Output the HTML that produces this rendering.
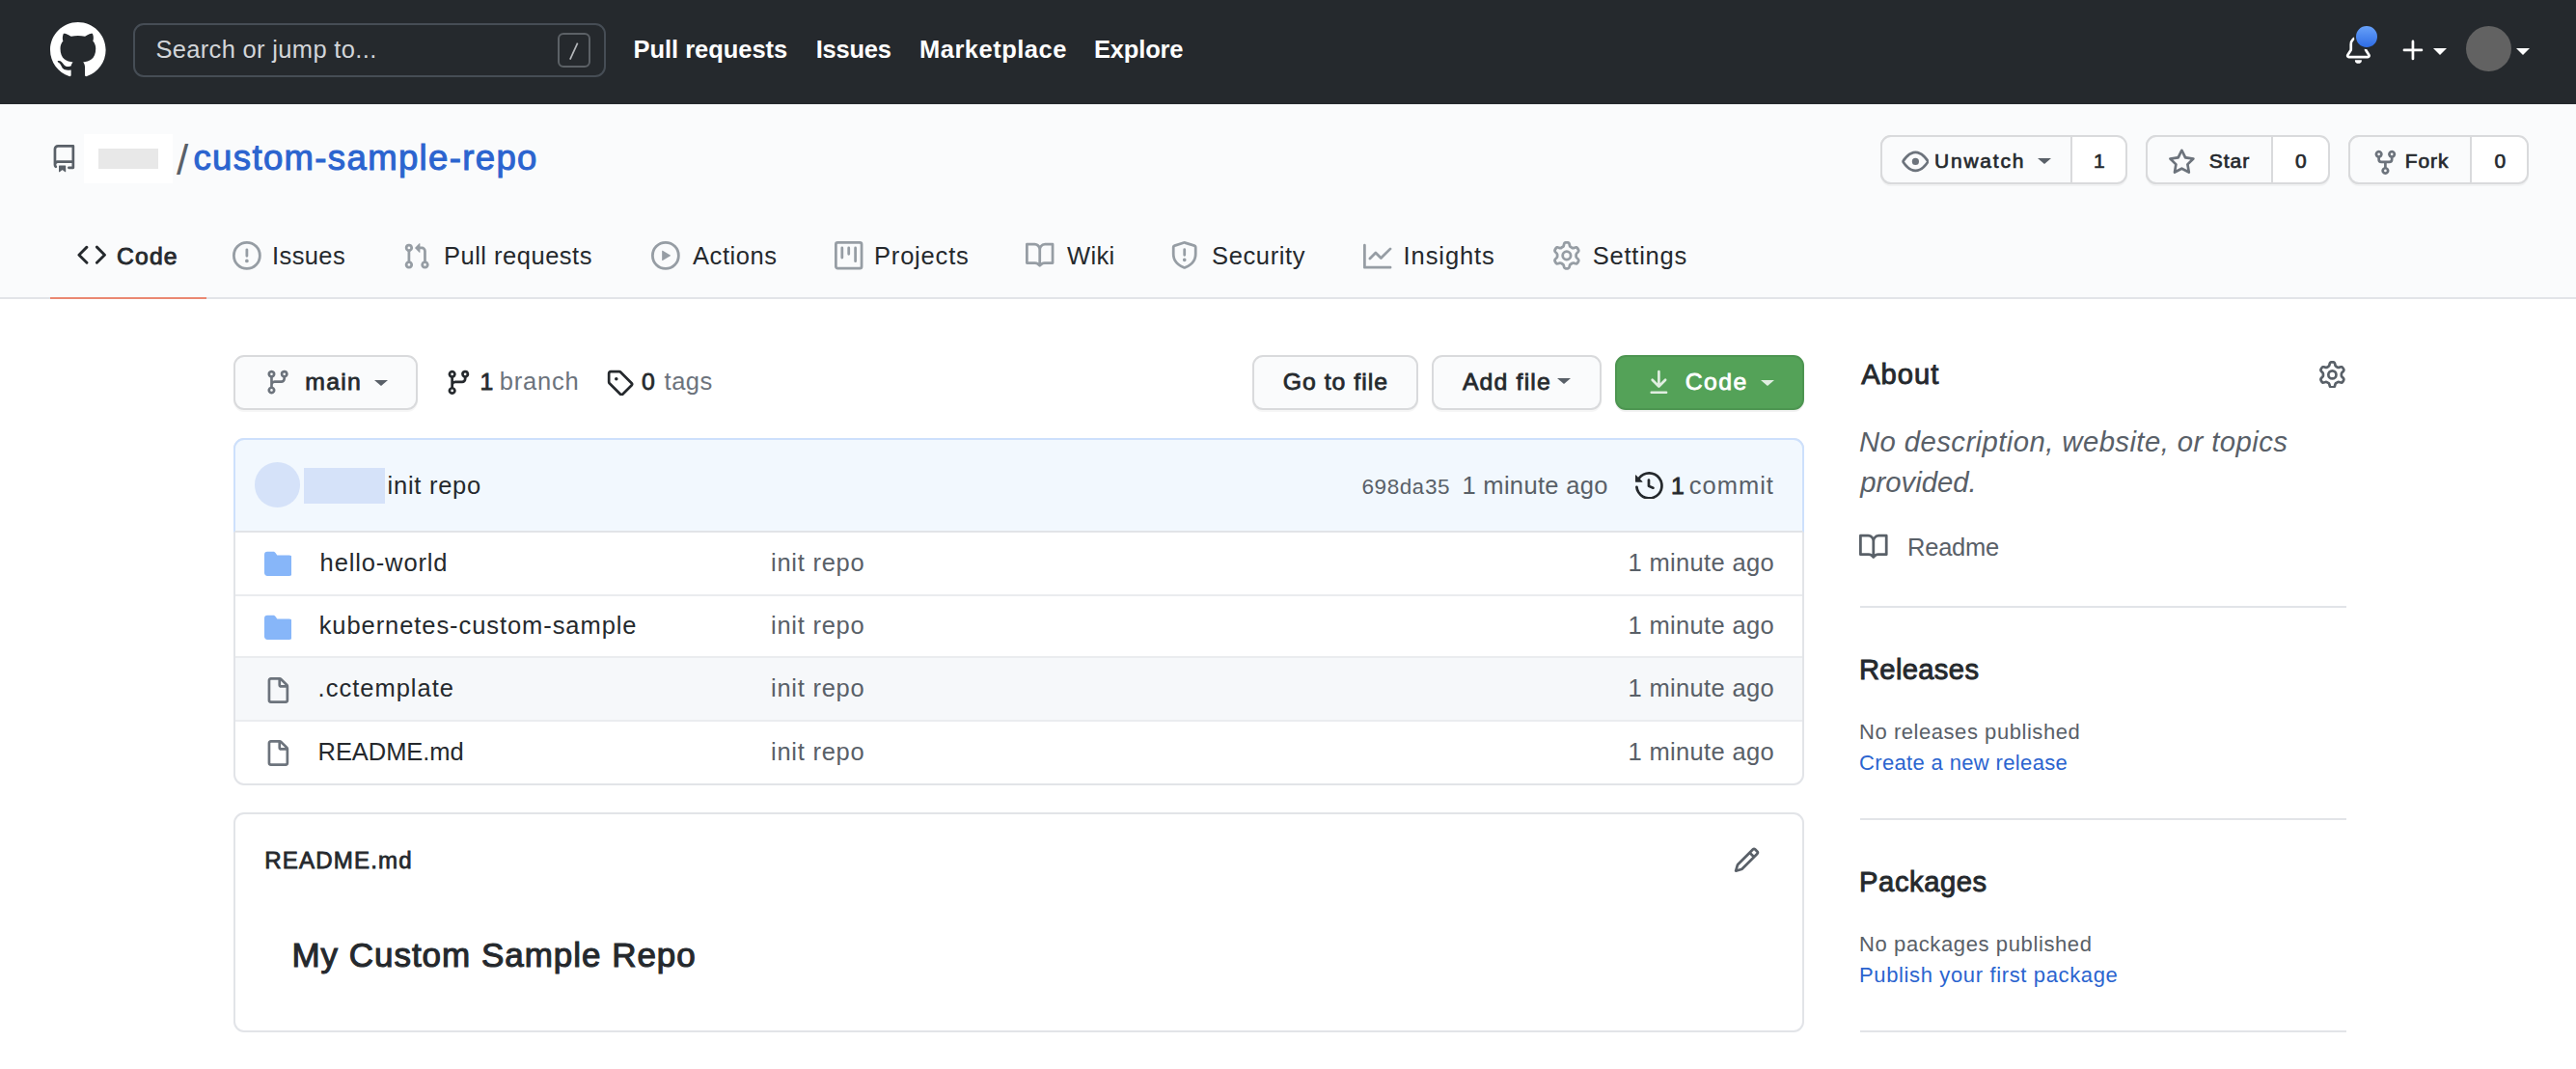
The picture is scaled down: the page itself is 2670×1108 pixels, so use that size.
<!DOCTYPE html>
<html><head><meta charset="utf-8"><title>custom-sample-repo</title>
<style>
html,body{margin:0;padding:0;}
body{width:2670px;height:1108px;overflow:hidden;position:relative;background:#fff;font-family:"Liberation Sans", sans-serif;}
.t{position:absolute;white-space:nowrap;}
.i{position:absolute;}
.b{position:absolute;box-sizing:border-box;}

.hdr{left:0;top:0;width:2670px;height:107.5px;background:#25292d;}
.rh{left:0;top:107.5px;width:2670px;height:202.5px;background:#fafbfc;border-bottom:2px solid #e2e4e8;}
.caret{position:absolute;width:0;height:0;border-left:7.6px solid transparent;border-right:7.6px solid transparent;border-top:7px solid currentColor;}
.btn{background:#fafbfc;border:2px solid #d9dadc;border-radius:11px;box-shadow:0 2px 0 rgba(27,31,35,0.04);}

</style></head><body>

<div class="b hdr"></div>
<div class="b" style="left:138px;top:24px;width:490px;height:56px;border:2px solid #464d55;border-radius:11px;"></div>
<div class="b" style="left:578px;top:34px;width:34px;height:36px;border:2px solid #5c6166;border-radius:6px;"></div>
<svg class="i" style="left:0;top:0" width="700" height="100"><line x1="598.3" y1="45.3" x2="591.2" y2="60.8" stroke="#b4b7ba" stroke-width="1.7" stroke-linecap="square"/></svg>
<div class="caret" style="left:2522px;top:50px;color:#fff;"></div>
<div class="b" style="left:2556.3px;top:27.3px;width:47px;height:47px;border-radius:50%;background:#626262;"></div>
<div class="caret" style="left:2608px;top:50px;color:#fff;"></div>
<div class="b rh"></div>
<div class="b" style="left:87px;top:139px;width:92px;height:51px;background:#fff;"></div>
<div class="b" style="left:102px;top:154px;width:62px;height:20.5px;background:#e8e8e8;"></div>
<!-- watch star fork -->
<div class="b btn" style="left:1948.5px;top:140.3px;width:256.7px;height:50.8px;background:#fff;"></div>
<div class="b" style="left:1948.5px;top:140.3px;width:199.3px;height:50.8px;background:#fafbfc;border:2px solid #d9dadc;border-radius:11px 0 0 11px;"></div>
<div class="caret" style="left:2111.5px;top:164px;color:#596068;border-top-width:6.6px;"></div>
<div class="b btn" style="left:2224.4px;top:140.3px;width:190.9px;height:50.8px;background:#fff;"></div>
<div class="b" style="left:2224.4px;top:140.3px;width:131.5px;height:50.8px;background:#fafbfc;border:2px solid #d9dadc;border-radius:11px 0 0 11px;"></div>
<div class="b btn" style="left:2434.4px;top:140.3px;width:187px;height:50.8px;background:#fff;"></div>
<div class="b" style="left:2434.4px;top:140.3px;width:127.2px;height:50.8px;background:#fafbfc;border:2px solid #d9dadc;border-radius:11px 0 0 11px;"></div>
<!-- tab underline -->
<div class="b" style="left:52px;top:307.5px;width:162px;height:2.5px;background:#ea8872;"></div>
<!-- branch row -->
<div class="b btn" style="left:242.3px;top:368.2px;width:191.2px;height:56.8px;"></div>
<div class="caret" style="left:388px;top:394px;color:#596068;border-top-width:6.3px;"></div>
<div class="b btn" style="left:1298.2px;top:368.2px;width:171.5px;height:56.8px;"></div>
<div class="b btn" style="left:1484.4px;top:368.2px;width:175.2px;height:56.8px;"></div>
<div class="caret" style="left:1614px;top:392px;color:#596068;border-top-width:6.3px;"></div>
<div class="b" style="left:1674px;top:368px;width:196px;height:57.2px;background:#54a258;border:2px solid #4d9551;border-radius:11px;box-shadow:0 2px 0 rgba(27,31,35,0.06);"></div>
<div class="caret" style="left:1824.5px;top:394px;color:rgba(255,255,255,0.82);border-top-width:6.3px;"></div>
<!-- file table -->
<div class="b" style="left:242px;top:454px;width:1628px;height:360px;border:2px solid #e2e4e8;border-radius:11px;overflow:hidden;background:#fff;">
  <div class="b" style="left:0;top:226px;width:1624px;height:64px;background:#f6f8fa;"></div>
  <div class="b" style="left:0;top:160px;width:1624px;height:2px;background:#eaecef;"></div>
  <div class="b" style="left:0;top:224px;width:1624px;height:2px;background:#eaecef;"></div>
  <div class="b" style="left:0;top:290px;width:1624px;height:2px;background:#eaecef;"></div>
</div>
<div class="b" style="left:242px;top:454px;width:1628px;height:98px;background:#f2f8fe;border:2px solid #cde0fc;border-bottom:2px solid #e2e4e8;border-radius:11px 11px 0 0;"></div>
<div class="b" style="left:263.5px;top:479.3px;width:47px;height:46.5px;border-radius:50%;background:#d5e2f9;"></div>
<div class="b" style="left:315px;top:485px;width:84px;height:37px;background:#d5e2f9;"></div>
<!-- readme box -->
<div class="b" style="left:242px;top:842px;width:1628px;height:228px;border:2px solid #e2e4e8;border-radius:11px;"></div>
<!-- sidebar dividers -->
<div class="b" style="left:1928px;top:628px;width:504px;height:2px;background:#e2e4e8;"></div>
<div class="b" style="left:1928px;top:848px;width:504px;height:2px;background:#e2e4e8;"></div>
<div class="b" style="left:1928px;top:1068px;width:504px;height:2px;background:#e2e4e8;"></div>
<!-- notification dot -->
<div class="b" style="left:2440.2px;top:25.2px;width:25.5px;height:25.5px;border-radius:50%;z-index:5;border:2.5px solid #25292d;background:linear-gradient(#68a1f8,#2e6ce5);"></div>

<div class=t style='left:161.40px;top:39.00px;font-family:"Liberation Sans", sans-serif;font-size:25.5px;line-height:25.5px;font-weight:400;color:#d2d5d9;letter-spacing:0.332px'>Search or jump to...</div><div class=t style='left:656.50px;top:38.90px;font-family:"Liberation Sans", sans-serif;font-size:25.5px;line-height:25.5px;font-weight:700;color:#ffffff;letter-spacing:-0.033px'>Pull requests</div><div class=t style='left:845.70px;top:38.90px;font-family:"Liberation Sans", sans-serif;font-size:25.5px;line-height:25.5px;font-weight:700;color:#ffffff;letter-spacing:-0.22px'>Issues</div><div class=t style='left:953.00px;top:38.90px;font-family:"Liberation Sans", sans-serif;font-size:25.5px;line-height:25.5px;font-weight:700;color:#ffffff;letter-spacing:0.5px'>Marketplace</div><div class=t style='left:1134.00px;top:38.90px;font-family:"Liberation Sans", sans-serif;font-size:25.5px;line-height:25.5px;font-weight:700;color:#ffffff;letter-spacing:-0.167px'>Explore</div><div class=t style='left:183.00px;top:144.00px;font-family:"Liberation Sans", sans-serif;font-size:44px;line-height:44px;font-weight:400;color:#596068;letter-spacing:0px'>/</div><div class=t style='left:200.50px;top:146.00px;font-family:"Liberation Sans", sans-serif;font-size:36.6px;line-height:36.6px;font-weight:400;color:#2b64cf;letter-spacing:1.324px;-webkit-text-stroke:1.0px #2b64cf'>custom-sample-repo</div><div class=t style='left:2005.00px;top:156.00px;font-family:"Liberation Sans", sans-serif;font-size:20.99px;line-height:20.99px;font-weight:400;color:#25292d;letter-spacing:1.783px;-webkit-text-stroke:0.68px #25292d'>Unwatch</div><div class=t style='left:2170.00px;top:156.00px;font-family:"Liberation Sans", sans-serif;font-size:20.99px;line-height:20.99px;font-weight:400;color:#25292d;letter-spacing:0px;-webkit-text-stroke:0.68px #25292d'>1</div><div class=t style='left:2289.70px;top:156.00px;font-family:"Liberation Sans", sans-serif;font-size:20.99px;line-height:20.99px;font-weight:400;color:#25292d;letter-spacing:1.033px;-webkit-text-stroke:0.68px #25292d'>Star</div><div class=t style='left:2379.00px;top:156.00px;font-family:"Liberation Sans", sans-serif;font-size:20.99px;line-height:20.99px;font-weight:400;color:#25292d;letter-spacing:0px;-webkit-text-stroke:0.68px #25292d'>0</div><div class=t style='left:2492.70px;top:156.00px;font-family:"Liberation Sans", sans-serif;font-size:20.99px;line-height:20.99px;font-weight:400;color:#25292d;letter-spacing:0.967px;-webkit-text-stroke:0.68px #25292d'>Fork</div><div class=t style='left:2585.50px;top:156.00px;font-family:"Liberation Sans", sans-serif;font-size:20.99px;line-height:20.99px;font-weight:400;color:#25292d;letter-spacing:0px;-webkit-text-stroke:0.68px #25292d'>0</div><div class=t style='left:121.10px;top:253.80px;font-family:"Liberation Sans", sans-serif;font-size:24.69px;line-height:24.69px;font-weight:400;color:#25292d;letter-spacing:1.133px;-webkit-text-stroke:0.9px #25292d'>Code</div><div class=t style='left:282.00px;top:252.80px;font-family:"Liberation Sans", sans-serif;font-size:25.5px;line-height:25.5px;font-weight:400;color:#25292d;letter-spacing:0.4px'>Issues</div><div class=t style='left:460.00px;top:252.80px;font-family:"Liberation Sans", sans-serif;font-size:25.5px;line-height:25.5px;font-weight:400;color:#25292d;letter-spacing:0.5px'>Pull requests</div><div class=t style='left:718.00px;top:252.80px;font-family:"Liberation Sans", sans-serif;font-size:25.5px;line-height:25.5px;font-weight:400;color:#25292d;letter-spacing:0.583px'>Actions</div><div class=t style='left:906.00px;top:252.80px;font-family:"Liberation Sans", sans-serif;font-size:25.5px;line-height:25.5px;font-weight:400;color:#25292d;letter-spacing:0.814px'>Projects</div><div class=t style='left:1106.00px;top:252.80px;font-family:"Liberation Sans", sans-serif;font-size:25.5px;line-height:25.5px;font-weight:400;color:#25292d;letter-spacing:0.333px'>Wiki</div><div class=t style='left:1256.00px;top:252.80px;font-family:"Liberation Sans", sans-serif;font-size:25.5px;line-height:25.5px;font-weight:400;color:#25292d;letter-spacing:0.629px'>Security</div><div class=t style='left:1454.60px;top:252.80px;font-family:"Liberation Sans", sans-serif;font-size:25.5px;line-height:25.5px;font-weight:400;color:#25292d;letter-spacing:0.914px'>Insights</div><div class=t style='left:1650.80px;top:252.80px;font-family:"Liberation Sans", sans-serif;font-size:25.5px;line-height:25.5px;font-weight:400;color:#25292d;letter-spacing:0.743px'>Settings</div><div class=t style='left:316.30px;top:384.00px;font-family:"Liberation Sans", sans-serif;font-size:24.78px;line-height:24.78px;font-weight:400;color:#25292d;letter-spacing:1.267px;-webkit-text-stroke:0.8px #25292d'>main</div><div class=t style='left:497.40px;top:384.00px;font-family:"Liberation Sans", sans-serif;font-size:24.78px;line-height:24.78px;font-weight:400;color:#25292d;letter-spacing:0px;-webkit-text-stroke:0.8px #25292d'>1</div><div class=t style='left:517.80px;top:383.00px;font-family:"Liberation Sans", sans-serif;font-size:25.5px;line-height:25.5px;font-weight:400;color:#6c737c;letter-spacing:0.78px'>branch</div><div class=t style='left:665.00px;top:384.00px;font-family:"Liberation Sans", sans-serif;font-size:24.78px;line-height:24.78px;font-weight:400;color:#25292d;letter-spacing:0px;-webkit-text-stroke:0.8px #25292d'>0</div><div class=t style='left:688.60px;top:383.00px;font-family:"Liberation Sans", sans-serif;font-size:25.5px;line-height:25.5px;font-weight:400;color:#6c737c;letter-spacing:0.467px'>tags</div><div class=t style='left:1329.75px;top:384.00px;font-family:"Liberation Sans", sans-serif;font-size:24.78px;line-height:24.78px;font-weight:400;color:#25292d;letter-spacing:1.017px;-webkit-text-stroke:0.8px #25292d'>Go to file</div><div class=t style='left:1515.90px;top:384.00px;font-family:"Liberation Sans", sans-serif;font-size:24.78px;line-height:24.78px;font-weight:400;color:#25292d;letter-spacing:1.186px;-webkit-text-stroke:0.8px #25292d'>Add file</div><div class=t style='left:1746.70px;top:384.00px;font-family:"Liberation Sans", sans-serif;font-size:24.78px;line-height:24.78px;font-weight:400;color:#ffffff;letter-spacing:1.433px;-webkit-text-stroke:0.8px #ffffff'>Code</div><div class=t style='left:401.60px;top:491.00px;font-family:"Liberation Sans", sans-serif;font-size:25.5px;line-height:25.5px;font-weight:400;color:#25292d;letter-spacing:0.737px'>init repo</div><div class=t style='left:1411.00px;top:495.00px;font-family:"Liberation Mono", monospace;font-size:22.5px;line-height:22.5px;font-weight:400;color:#596068;letter-spacing:-0.417px'>698da35</div><div class=t style='left:1515.40px;top:491.00px;font-family:"Liberation Sans", sans-serif;font-size:25.5px;line-height:25.5px;font-weight:400;color:#596068;letter-spacing:0.327px'>1 minute ago</div><div class=t style='left:1732.00px;top:492.00px;font-family:"Liberation Sans", sans-serif;font-size:24.78px;line-height:24.78px;font-weight:400;color:#25292d;letter-spacing:0px;-webkit-text-stroke:0.8px #25292d'>1</div><div class=t style='left:1750.80px;top:491.00px;font-family:"Liberation Sans", sans-serif;font-size:25.5px;line-height:25.5px;font-weight:400;color:#596068;letter-spacing:0.98px'>commit</div><div class=t style='left:331.60px;top:570.80px;font-family:"Liberation Sans", sans-serif;font-size:25.5px;line-height:25.5px;font-weight:400;color:#25292d;letter-spacing:0.86px'>hello-world</div><div class=t style='left:799.00px;top:570.80px;font-family:"Liberation Sans", sans-serif;font-size:25.5px;line-height:25.5px;font-weight:400;color:#596068;letter-spacing:0.75px'>init repo</div><div class=t style='left:1687.50px;top:570.80px;font-family:"Liberation Sans", sans-serif;font-size:25.5px;line-height:25.5px;font-weight:400;color:#596068;letter-spacing:0.345px'>1 minute ago</div><div class=t style='left:330.70px;top:636.05px;font-family:"Liberation Sans", sans-serif;font-size:25.5px;line-height:25.5px;font-weight:400;color:#25292d;letter-spacing:0.926px'>kubernetes-custom-sample</div><div class=t style='left:799.00px;top:636.05px;font-family:"Liberation Sans", sans-serif;font-size:25.5px;line-height:25.5px;font-weight:400;color:#596068;letter-spacing:0.75px'>init repo</div><div class=t style='left:1687.50px;top:636.05px;font-family:"Liberation Sans", sans-serif;font-size:25.5px;line-height:25.5px;font-weight:400;color:#596068;letter-spacing:0.345px'>1 minute ago</div><div class=t style='left:329.60px;top:701.30px;font-family:"Liberation Sans", sans-serif;font-size:25.5px;line-height:25.5px;font-weight:400;color:#25292d;letter-spacing:0.99px'>.cctemplate</div><div class=t style='left:799.00px;top:701.30px;font-family:"Liberation Sans", sans-serif;font-size:25.5px;line-height:25.5px;font-weight:400;color:#596068;letter-spacing:0.75px'>init repo</div><div class=t style='left:1687.50px;top:701.30px;font-family:"Liberation Sans", sans-serif;font-size:25.5px;line-height:25.5px;font-weight:400;color:#596068;letter-spacing:0.345px'>1 minute ago</div><div class=t style='left:329.60px;top:766.55px;font-family:"Liberation Sans", sans-serif;font-size:25.5px;line-height:25.5px;font-weight:400;color:#25292d;letter-spacing:-0.075px'>README.md</div><div class=t style='left:799.00px;top:766.55px;font-family:"Liberation Sans", sans-serif;font-size:25.5px;line-height:25.5px;font-weight:400;color:#596068;letter-spacing:0.75px'>init repo</div><div class=t style='left:1687.50px;top:766.55px;font-family:"Liberation Sans", sans-serif;font-size:25.5px;line-height:25.5px;font-weight:400;color:#596068;letter-spacing:0.345px'>1 minute ago</div><div class=t style='left:274.20px;top:880.30px;font-family:"Liberation Sans", sans-serif;font-size:24.08px;line-height:24.08px;font-weight:400;color:#25292d;letter-spacing:1.163px;-webkit-text-stroke:0.8px #25292d'>README.md</div><div class=t style='left:302.40px;top:971.90px;font-family:"Liberation Sans", sans-serif;font-size:35.01px;line-height:35.01px;font-weight:400;color:#25292d;letter-spacing:0.98px;-webkit-text-stroke:1.1px #25292d'>My Custom Sample Repo</div><div class=t style='left:1929.20px;top:373.90px;font-family:"Liberation Sans", sans-serif;font-size:29.19px;line-height:29.19px;font-weight:400;color:#25292d;letter-spacing:0.95px;-webkit-text-stroke:0.9px #25292d'>About</div><div class=t style='left:1927.00px;top:442.60px;font-family:"Liberation Sans", sans-serif;font-size:29.3px;line-height:29.3px;font-weight:400;color:#596068;letter-spacing:0.424px;font-style:italic'>No description, website, or topics</div><div class=t style='left:1928.20px;top:484.80px;font-family:"Liberation Sans", sans-serif;font-size:29.3px;line-height:29.3px;font-weight:400;color:#596068;letter-spacing:0px;font-style:italic'>provided.</div><div class=t style='left:1977.10px;top:554.60px;font-family:"Liberation Sans", sans-serif;font-size:25.5px;line-height:25.5px;font-weight:400;color:#596068;letter-spacing:-0.26px'>Readme</div><div class=t style='left:1926.90px;top:680.30px;font-family:"Liberation Sans", sans-serif;font-size:29.19px;line-height:29.19px;font-weight:400;color:#25292d;letter-spacing:0.343px;-webkit-text-stroke:0.9px #25292d'>Releases</div><div class=t style='left:1927.00px;top:748.20px;font-family:"Liberation Sans", sans-serif;font-size:22px;line-height:22px;font-weight:400;color:#596068;letter-spacing:0.55px'>No releases published</div><div class=t style='left:1927.00px;top:780.00px;font-family:"Liberation Sans", sans-serif;font-size:22px;line-height:22px;font-weight:400;color:#2b64cf;letter-spacing:0.353px'>Create a new release</div><div class=t style='left:1927.10px;top:900.20px;font-family:"Liberation Sans", sans-serif;font-size:29.19px;line-height:29.19px;font-weight:400;color:#25292d;letter-spacing:0.543px;-webkit-text-stroke:0.9px #25292d'>Packages</div><div class=t style='left:1927.00px;top:968.00px;font-family:"Liberation Sans", sans-serif;font-size:22px;line-height:22px;font-weight:400;color:#596068;letter-spacing:0.61px'>No packages published</div><div class=t style='left:1927.00px;top:999.50px;font-family:"Liberation Sans", sans-serif;font-size:22px;line-height:22px;font-weight:400;color:#2b64cf;letter-spacing:0.636px'>Publish your first package</div><svg class=i style='left:52.20px;top:23.11px;width:57.60px;height:57.60px' viewBox='0 0 16 16' fill='#ffffff' fill-rule='evenodd'><path d='M8 0C3.58 0 0 3.58 0 8c0 3.54 2.29 6.53 5.47 7.59.4.07.55-.17.55-.38 0-.19-.01-.82-.01-1.49-2.01.37-2.53-.49-2.69-.94-.09-.23-.48-.94-.82-1.13-.28-.15-.68-.52-.01-.53.63-.01 1.08.58 1.23.82.72 1.21 1.87.87 2.33.66.07-.52.28-.87.51-1.07-1.780-.2-3.64-.89-3.64-3.95 0-.87.31-1.59.82-2.15-.08-.2-.36-1.02.08-2.12 0 0 .67-.21 2.2.82.64-.18 1.32-.27 2-.27.68 0 1.36.09 2 .27 1.53-1.04 2.2-.82 2.2-.82.44 1.1.16 1.92.08 2.12.51.56.82 1.27.82 2.15 0 3.07-1.87 3.75-3.65 3.95.29.25.54.73.54 1.48 0 1.07-.01 1.93-.01 2.2 0 .21.15.46.55.38A8.013 8.013 0 0016 8c0-4.42-3.58-8-8-8z'/></svg><svg class=i style='left:2430.20px;top:37.20px;width:28.80px;height:28.80px' viewBox='0 0 16 16' fill='#ffffff' fill-rule='evenodd'><path d='M8 16a2 2 0 001.985-1.75c.017-.137-.097-.25-.235-.25h-3.5c-.138 0-.252.113-.235.25A2 2 0 008 16zM8 1.5A3.5 3.5 0 004.5 5v2.947c0 .346-.102.683-.294.97l-1.703 2.556a.018.018 0 00-.003.01l.001.006c0 .002.002.004.004.006a.017.017 0 00.006.004l.007.001h10.964l.007-.001a.016.016 0 00.006-.004.016.016 0 00.004-.006l.001-.007a.017.017 0 00-.003-.01l-1.703-2.554a1.75 1.75 0 01-.294-.97V5A3.5 3.5 0 008 1.5zM3 5a5 5 0 0110 0v2.947c0 .05.015.098.042.139l1.703 2.555A1.518 1.518 0 0113.482 13H2.518a1.518 1.518 0 01-1.263-2.36l1.703-2.554A.25.25 0 003 7.947V5z'/></svg><svg class=i style='left:2486.55px;top:37.65px;width:28.80px;height:28.80px' viewBox='0 0 16 16' fill='#ffffff' fill-rule='evenodd'><path d='M7.750 2a.75.75 0 01.75.75V7h4.25a.75.75 0 110 1.5H8.5v4.25a.75.75 0 11-1.5 0V8.5H2.75a.75.75 0 010-1.5H7V2.75A.75.75 0 017.75 2z'/></svg><svg class=i style='left:51.60px;top:150.32px;width:28.80px;height:28.80px' viewBox='0 0 16 16' fill='#596068' fill-rule='evenodd'><path d='M2 2.5A2.5 2.5 0 014.5 0h8.75a.75.75 0 01.75.75v12.5a.75.75 0 01-.75.75h-2.5a.75.75 0 110-1.5h1.75v-2h-8a1 1 0 00-.714 1.7.75.75 0 01-1.072 1.05A2.495 2.495 0 012 11.5v-9zm10.5-1V9h-8c-.356 0-.694.074-1 .208V2.5a1 1 0 011-1h8zM5 12.25v3.25a.25.25 0 00.4.2l1.45-1.087a.25.25 0 01.3 0L8.6 15.7a.25.25 0 00.4-.2v-3.25a.25.25 0 00-.25-.25h-3.5a.25.25 0 00-.25.25z'/></svg><svg class=i style='left:79.95px;top:249.45px;width:30.40px;height:30.40px' viewBox='0 0 16 16' fill='#25292d' fill-rule='evenodd'><path d='M4.72 3.22a.75.75 0 011.06 1.06L2.06 8l3.72 3.72a.75.75 0 11-1.06 1.06L.47 8.53a.75.75 0 010-1.06l4.25-4.25zm6.56 0a.75.75 0 10-1.06 1.06L13.94 8l-3.72 3.72a.75.75 0 101.06 1.06l4.25-4.25a.75.75 0 000-1.06l-4.25-4.25z'/></svg><svg class=i style='left:241.12px;top:250.32px;width:29.76px;height:29.76px' viewBox='0 0 16 16' fill='#969da4' fill-rule='evenodd'><path d='M8 1.5a6.5 6.5 0 100 13 6.5 6.5 0 000-13zM0 8a8 8 0 1116 0A8 8 0 010 8zm9 3a1 1 0 11-2 0 1 1 0 012 0zm-.25-6.25a.75.75 0 00-1.5 0v3.5a.75.75 0 001.5 0v-3.5z'/></svg><svg class=i style='left:417.47px;top:250.94px;width:29.44px;height:29.44px' viewBox='0 0 16 16' fill='#969da4' fill-rule='evenodd'><path d='M7.177 3.073L9.573.677A.25.25 0 0110 .854v4.792a.25.25 0 01-.427.177L7.177 3.427a.25.25 0 010-.354zM3.75 2.5a.75.75 0 100 1.5.75.75 0 000-1.5zm-2.25.75a2.25 2.25 0 113 2.122v5.256a2.251 2.251 0 11-1.5 0V5.372A2.25 2.25 0 011.5 3.25zM11 2.5h-1V4h1a1 1 0 011 1v5.628a2.251 2.251 0 101.5 0V5A2.5 2.5 0 0011 2.5zm1 10.25a.75.75 0 111.5 0 .75.75 0 01-1.5 0zM3.75 12a.75.75 0 100 1.5.75.75 0 000-1.5z'/></svg><svg class=i style='left:674.97px;top:250.32px;width:29.76px;height:29.76px' viewBox='0 0 16 16' fill='#969da4' fill-rule='evenodd'><path d='M1.5 8a6.5 6.5 0 1113 0 6.5 6.5 0 01-13 0zM8 0a8 8 0 100 16A8 8 0 008 0zM6.379 5.227A.25.25 0 006 5.442v5.117a.25.25 0 00.379.214l4.264-2.559a.25.25 0 000-.428L6.379 5.227z'/></svg><svg class=i style='left:865.28px;top:250.48px;width:29.44px;height:29.44px' viewBox='0 0 16 16' fill='#969da4' fill-rule='evenodd'><path d='M1.75 0A1.75 1.75 0 000 1.75v12.5C0 15.216.784 16 1.75 16h12.5A1.75 1.75 0 0016 14.25V1.75A1.75 1.75 0 0014.25 0H1.75zM1.5 1.75a.25.25 0 01.25-.25h12.5a.25.25 0 01.25.25v12.5a.25.25 0 01-.25.25H1.75a.25.25 0 01-.25-.25V1.75zM11.75 3a.75.75 0 00-.75.75v7.5a.75.75 0 001.5 0v-7.5a.75.75 0 00-.75-.75zm-8.25.75a.75.75 0 011.5 0v5.5a.75.75 0 01-1.5 0v-5.5zM8 3a.75.75 0 00-.75.75v3.5a.75.75 0 001.5 0v-3.5A.75.75 0 008 3z'/></svg><svg class=i style='left:1063.08px;top:250.34px;width:29.44px;height:29.44px' viewBox='0 0 16 16' fill='#969da4' fill-rule='evenodd'><path d='M0 1.75A.75.75 0 01.75 1h4.253c1.227 0 2.317.59 3 1.501A3.744 3.744 0 0111.006 1h4.245a.75.75 0 01.75.75v10.5a.75.75 0 01-.75.75h-4.507a2.25 2.25 0 00-1.591.659l-.622.621a.75.75 0 01-1.06 0l-.622-.621A2.25 2.25 0 005.258 13H.75a.75.75 0 01-.75-.75V1.75zm8.755 3a2.25 2.25 0 012.25-2.25H14.5v9h-3.757c-.71 0-1.4.201-1.992.572l.004-7.322zm-1.504 7.324l.004-5.073-.002-2.253A2.25 2.25 0 005.003 2.5H1.5v9h3.757a3.75 3.75 0 011.994.574z'/></svg><svg class=i style='left:1212.78px;top:250.14px;width:29.44px;height:29.44px' viewBox='0 0 16 16' fill='#969da4' fill-rule='evenodd'><path d='M7.467.133a1.75 1.75 0 011.066 0l5.25 1.68A1.75 1.75 0 0115 3.48V7c0 1.566-.32 3.182-1.303 4.682-.983 1.498-2.585 2.813-5.032 3.855a1.7 1.7 0 01-1.33 0c-2.447-1.042-4.049-2.357-5.032-3.855C1.32 10.182 1 8.566 1 7V3.48a1.75 1.75 0 011.217-1.667l5.25-1.68zm.61 1.429a.25.25 0 00-.153 0l-5.25 1.68a.25.25 0 00-.174.238V7c0 1.358.275 2.666 1.057 3.86.784 1.194 2.121 2.34 4.366 3.297a.2.2 0 00.154 0c2.245-.956 3.582-2.104 4.366-3.298C13.225 9.666 13.5 8.36 13.5 7V3.48a.25.25 0 00-.174-.237l-5.25-1.68zM9 10.5a1 1 0 11-2 0 1 1 0 012 0zm-.25-5.75a.75.75 0 10-1.5 0v3a.75.75 0 001.5 0v-3z'/></svg><svg class=i style='left:1413.18px;top:250.58px;width:29.44px;height:29.44px' viewBox='0 0 16 16' fill='#969da4' fill-rule='evenodd'><path d='M1.5 1.75a.75.75 0 00-1.5 0v12.5c0 .414.336.75.75.75h14.5a.75.75 0 000-1.5H1.5V1.75zm14.28 2.53a.75.75 0 00-1.06-1.06L10 7.940 7.53 5.47a.75.75 0 00-1.06 0L3.22 8.72a.75.75 0 001.06 1.06L7 7.06l2.47 2.47a.75.75 0 001.06 0l5.250-5.25z'/></svg><svg class=i style='left:1609.12px;top:250.32px;width:29.76px;height:29.76px' viewBox='0 0 16 16' fill='#969da4' fill-rule='evenodd'><path d='M7.429 1.525a6.593 6.593 0 011.142 0c.036.003.108.036.137.146l.289 1.105c.147.56.55.967.997 1.189.174.086.341.183.501.29.417.278.97.423 1.53.27l1.102-.303c.11-.03.175.016.195.046.219.31.41.641.573.989.014.031.022.11-.059.19l-.815.806c-.411.406-.562.957-.53 1.456a4.588 4.588 0 010 .582c-.032.499.119 1.05.53 1.456l.815.806c.08.08.073.159.059.19a6.494 6.494 0 01-.573.99c-.02.029-.086.074-.195.045l-1.103-.303c-.559-.153-1.112-.008-1.529.27-.16.107-.327.204-.5.29-.449.222-.851.628-.998 1.189l-.289 1.105c-.029.11-.101.143-.137.146a6.613 6.613 0 01-1.142 0c-.036-.003-.108-.037-.137-.146l-.289-1.105c-.147-.56-.55-.967-.997-1.189a4.502 4.502 0 01-.501-.29c-.417-.278-.97-.423-1.530-.27l-1.102.303c-.11.03-.175-.016-.195-.046a6.492 6.492 0 01-.573-.989c-.014-.031-.022-.11.059-.19l.815-.806c.411-.406.562-.957.53-1.456a4.587 4.587 0 010-.582c.032-.499-.119-1.05-.53-1.456l-.815-.806c-.08-.08-.073-.159-.059-.19a6.44 6.44 0 01.573-.99c.02-.029.086-.075.195-.045l1.103.303c.559.153 1.112.008 1.529-.27.16-.107.327-.204.5-.29.449-.222.851-.628.998-1.189l.289-1.105c.029-.11.101-.143.137-.146zM8 0c-.236 0-.47.01-.701.03-.743.065-1.29.615-1.458 1.261l-.29 1.106c-.017.066-.078.158-.211.224a5.994 5.994 0 00-.668.386c-.123.082-.233.09-.3.071L3.27 2.776c-.644-.177-1.392.02-1.82.63a7.977 7.977 0 00-.704 1.217c-.315.675-.111 1.422.363 1.891l.815.806c.05.048.098.147.088.294a6.084 6.084 0 000 .772c.01.147-.038.246-.088.294l-.815.806c-.474.469-.678 1.216-.363 1.891.2.428.436.835.704 1.218.428.609 1.176.806 1.82.63l1.103-.303c.066-.019.176-.011.299.071.213.143.436.272.668.386.133.066.194.158.212.224l.289 1.106c.169.646.715 1.196 1.458 1.26a8.094 8.094 0 001.402 0c.743-.064 1.29-.614 1.458-1.26l.29-1.106c.017-.066.078-.158.211-.224a5.98 5.98 0 00.668-.386c.123-.082.233-.09.299-.071l1.103.303c.644.176 1.392-.021 1.82-.63.268-.382.505-.789.704-1.217.315-.675.111-1.422-.364-1.891l-.814-.806c-.05-.048-.098-.147-.088-.294a6.1 6.1 0 000-.772c-.01-.147.039-.246.088-.294l.814-.806c.475-.469.679-1.216.364-1.891a7.992 7.992 0 00-.704-1.218c-.428-.609-1.176-.806-1.82-.63l-1.103.303c-.066.019-.176.011-.299-.071a5.991 5.991 0 00-.668-.386c-.133-.066-.194-.158-.212-.224L10.16 1.29C9.99.645 9.444.095 8.701.031A8.094 8.094 0 008 0zm1.5 8a1.5 1.5 0 11-3 0 1.5 1.5 0 013 0zM11 8a3 3 0 11-6 0 3 3 0 016 0z'/></svg><svg class=i style='left:1970.60px;top:153.40px;width:28.80px;height:28.80px' viewBox='0 0 16 16' fill='#6c737c' fill-rule='evenodd'><path d='M1.679 7.932c.412-.621 1.242-1.75 2.366-2.717C5.175 4.242 6.527 3.5 8 3.5c1.473 0 2.824.742 3.955 1.715 1.124.967 1.954 2.096 2.366 2.717a.119.119 0 010 .136c-.412.621-1.242 1.75-2.366 2.717C10.825 11.758 9.473 12.5 8 12.5c-1.473 0-2.824-.742-3.955-1.715C2.92 9.818 2.09 8.690 1.679 8.068a.119.119 0 010-.136zM8 2c-1.981 0-3.67.992-4.933 2.078C1.797 5.169.88 6.423.43 7.1a1.619 1.619 0 000 1.798c.45.678 1.367 1.932 2.637 3.024C4.329 13.008 6.019 14 8 14c1.981 0 3.67-.992 4.933-2.078 1.27-1.091 2.187-2.345 2.637-3.023a1.619 1.619 0 000-1.798c-.45-.678-1.367-1.932-2.637-3.023C11.671 2.992 9.981 2 8 2zm0 8a2 2 0 100-4 2 2 0 000 4z'/></svg><svg class=i style='left:2246.50px;top:153.65px;width:28.80px;height:28.80px' viewBox='0 0 16 16' fill='#6c737c' fill-rule='evenodd'><path d='M8 .25a.75.75 0 01.673.418l1.882 3.815 4.210.612a.75.75 0 01.416 1.279l-3.046 2.970.719 4.192a.75.75 0 01-1.088.791L8 12.347l-3.766 1.980a.75.75 0 01-1.088-.79l.72-4.194L.818 6.374a.75.75 0 01.416-1.280l4.210-.611L7.327.668A.75.75 0 018 .25zm0 2.445L6.615 5.500a.75.75 0 01-.564.41l-3.097.45 2.240 2.184a.75.75 0 01.216.664l-.528 3.084 2.769-1.456a.75.75 0 01.698 0l2.770 1.456-.530-3.084a.75.75 0 01.216-.664l2.240-2.183-3.096-.45a.75.75 0 01-.564-.41L8 2.694v.001z'/></svg><svg class=i style='left:2457.65px;top:153.50px;width:28.80px;height:28.80px' viewBox='0 0 16 16' fill='#6c737c' fill-rule='evenodd'><path d='M5 3.25a.75.75 0 11-1.5 0 .75.75 0 011.5 0zm0 2.122a2.25 2.25 0 10-1.5 0v.878A2.25 2.25 0 005.75 8.5h1.5v2.128a2.251 2.251 0 101.5 0V8.5h1.5a2.25 2.25 0 002.25-2.25v-.878a2.25 2.25 0 10-1.5 0v.878a.75.75 0 01-.75.75h-4.5A.75.75 0 015 6.25v-.878zm3.75 7.378a.75.75 0 11-1.5 0 .75.75 0 011.5 0zm3-8.75a.75.75 0 100-1.5.75.75 0 000 1.5z'/></svg><svg class=i style='left:273.97px;top:381.92px;width:28.16px;height:28.16px' viewBox='0 0 16 16' fill='#6c737c' fill-rule='evenodd'><path d='M11.75 2.5a.75.75 0 100 1.5.75.75 0 000-1.5zm-2.25.75a2.25 2.25 0 113 2.122V6A2.5 2.5 0 0110 8.5H6a1 1 0 00-1 1v1.128a2.251 2.251 0 11-1.5 0V5.372a2.25 2.25 0 111.5 0v1.836A2.492 2.492 0 016 7h4a1 1 0 001-1v-.628A2.25 2.25 0 019.5 3.25zM4.25 12a.75.75 0 100 1.5.75.75 0 000-1.5zM3.5 3.25a.75.75 0 111.5 0 .75.75 0 01-1.5 0z'/></svg><svg class=i style='left:461.35px;top:381.60px;width:28.80px;height:28.80px' viewBox='0 0 16 16' fill='#25292d' fill-rule='evenodd'><path d='M11.75 2.5a.75.75 0 100 1.5.75.75 0 000-1.5zm-2.25.75a2.25 2.25 0 113 2.122V6A2.5 2.5 0 0110 8.5H6a1 1 0 00-1 1v1.128a2.251 2.251 0 11-1.5 0V5.372a2.25 2.25 0 111.5 0v1.836A2.492 2.492 0 016 7h4a1 1 0 001-1v-.628A2.25 2.25 0 019.5 3.25zM4.25 12a.75.75 0 100 1.5.75.75 0 000-1.5zM3.5 3.25a.75.75 0 111.5 0 .75.75 0 01-1.5 0z'/></svg><svg class=i style='left:628.40px;top:381.60px;width:28.80px;height:28.80px' viewBox='0 0 16 16' fill='#25292d' fill-rule='evenodd'><path d='M2.5 7.775V2.75a.25.25 0 01.25-.25h5.025a.25.25 0 01.177.073l6.25 6.25a.25.25 0 010 .354l-5.025 5.025a.25.25 0 01-.354 0l-6.25-6.25a.25.25 0 01-.073-.177zm-1.5 0V2.75C1 1.784 1.784 1 2.75 1h5.025c.464 0 .91.184 1.238.513l6.25 6.25a1.75 1.75 0 010 2.474l-5.026 5.026a1.75 1.75 0 01-2.474 0l-6.25-6.25A1.75 1.75 0 011 7.775zM6 5a1 1 0 100 2 1 1 0 000-2z'/></svg><svg class=i style='left:1704.60px;top:381.70px;width:28.80px;height:28.80px' viewBox='0 0 16 16' fill='rgba(255,255,255,0.82)' fill-rule='evenodd'><path d='M7.47 10.78a.75.75 0 001.06 0l3.75-3.75a.75.75 0 00-1.06-1.06L8.75 8.44V1.75a.75.75 0 00-1.5 0v6.69L4.78 5.97a.75.75 0 00-1.06 1.06l3.75 3.75zM3.75 13a.75.75 0 000 1.5h8.5a.75.75 0 000-1.5h-8.5z'/></svg><svg class=i style='left:1695.35px;top:488.50px;width:28.80px;height:28.80px' viewBox='0 0 16 16' fill='#25292d' fill-rule='evenodd'><path d='M1.643 3.143L.427 1.927A.25.25 0 000 2.104V5.75c0 .138.112.25.25.25h3.646a.25.25 0 00.177-.427L2.715 4.215a6.5 6.5 0 11-1.18 4.458.75.75 0 10-1.493.154 8.001 8.001 0 101.6-5.684zM7.75 4a.75.75 0 01.75.75v2.992l2.028.812a.75.75 0 01-.557 1.392l-2.5-1A.75.75 0 017 8.25v-3.5A.75.75 0 017.75 4z'/></svg><svg class=i style='left:273.60px;top:569.70px;width:28.80px;height:28.80px' viewBox='0 0 16 16' fill='#87b6f9' fill-rule='evenodd'><path d='M1.75 1A1.75 1.75 0 000 2.75v10.5C0 14.216.784 15 1.75 15h12.5A1.75 1.75 0 0016 13.25v-8.5A1.75 1.75 0 0014.25 3H7.5a.25.25 0 01-.2-.1l-.9-1.2C6.07 1.26 5.55 1 5 1H1.75z'/></svg><svg class=i style='left:273.60px;top:635.50px;width:28.80px;height:28.80px' viewBox='0 0 16 16' fill='#87b6f9' fill-rule='evenodd'><path d='M1.75 1A1.75 1.75 0 000 2.75v10.5C0 14.216.784 15 1.75 15h12.5A1.75 1.75 0 0016 13.25v-8.5A1.75 1.75 0 0014.25 3H7.5a.25.25 0 01-.2-.1l-.9-1.2C6.07 1.26 5.55 1 5 1H1.75z'/></svg><svg class=i style='left:273.50px;top:701.60px;width:28.80px;height:28.80px' viewBox='0 0 16 16' fill='#6c737c' fill-rule='evenodd'><path d='M3.75 1.5a.25.25 0 00-.25.25v11.5c0 .138.112.25.25.25h8.5a.25.25 0 00.25-.25V6H9.75A1.75 1.75 0 018 4.25V1.5H3.75zm5.75.56v2.19c0 .138.112.25.25.25h2.19L9.5 2.06zM2 1.75C2 .784 2.784 0 3.75 0h5.086c.464 0 .909.184 1.237.513l3.414 3.414c.329.328.513.773.513 1.237v8.086A1.75 1.75 0 0112.25 15h-8.5A1.75 1.75 0 012 13.25V1.75z'/></svg><svg class=i style='left:273.50px;top:766.90px;width:28.80px;height:28.80px' viewBox='0 0 16 16' fill='#6c737c' fill-rule='evenodd'><path d='M3.75 1.5a.25.25 0 00-.25.25v11.5c0 .138.112.25.25.25h8.5a.25.25 0 00.25-.25V6H9.75A1.75 1.75 0 018 4.25V1.5H3.75zm5.75.56v2.19c0 .138.112.25.25.25h2.19L9.5 2.06zM2 1.75C2 .784 2.784 0 3.75 0h5.086c.464 0 .909.184 1.237.513l3.414 3.414c.329.328.513.773.513 1.237v8.086A1.75 1.75 0 0112.25 15h-8.5A1.75 1.75 0 012 13.25V1.75z'/></svg><svg class=i style='left:1795.62px;top:876.53px;width:28.80px;height:28.80px' viewBox='0 0 16 16' fill='#596068' fill-rule='evenodd'><path d='M11.013 1.427a1.75 1.75 0 012.474 0l1.086 1.086a1.75 1.75 0 010 2.474l-8.61 8.61c-.21.21-.47.364-.756.445l-3.251.93a.75.75 0 01-.927-.928l.929-3.25a1.75 1.75 0 01.445-.758l8.61-8.61zm1.414 1.06a.25.25 0 00-.354 0L10.811 3.75l1.439 1.44 1.263-1.263a.25.25 0 000-.354l-1.086-1.086zM11.189 6.25L9.75 4.81l-6.286 6.287a.25.25 0 00-.064.108l-.558 1.953 1.953-.558a.249.249 0 00.108-.064l6.286-6.286z'/></svg><svg class=i style='left:2402.80px;top:373.50px;width:28.80px;height:28.80px' viewBox='0 0 16 16' fill='#596068' fill-rule='evenodd'><path d='M7.429 1.525a6.593 6.593 0 011.142 0c.036.003.108.036.137.146l.289 1.105c.147.56.55.967.997 1.189.174.086.341.183.501.29.417.278.97.423 1.53.27l1.102-.303c.11-.03.175.016.195.046.219.31.41.641.573.989.014.031.022.11-.059.19l-.815.806c-.411.406-.562.957-.53 1.456a4.588 4.588 0 010 .582c-.032.499.119 1.05.53 1.456l.815.806c.08.08.073.159.059.19a6.494 6.494 0 01-.573.99c-.02.029-.086.074-.195.045l-1.103-.303c-.559-.153-1.112-.008-1.529.27-.16.107-.327.204-.5.29-.449.222-.851.628-.998 1.189l-.289 1.105c-.029.11-.101.143-.137.146a6.613 6.613 0 01-1.142 0c-.036-.003-.108-.037-.137-.146l-.289-1.105c-.147-.56-.55-.967-.997-1.189a4.502 4.502 0 01-.501-.29c-.417-.278-.97-.423-1.530-.27l-1.102.303c-.11.03-.175-.016-.195-.046a6.492 6.492 0 01-.573-.989c-.014-.031-.022-.11.059-.19l.815-.806c.411-.406.562-.957.53-1.456a4.587 4.587 0 010-.582c.032-.499-.119-1.05-.53-1.456l-.815-.806c-.08-.08-.073-.159-.059-.19a6.44 6.44 0 01.573-.99c.02-.029.086-.075.195-.045l1.103.303c.559.153 1.112.008 1.529-.27.16-.107.327-.204.5-.29.449-.222.851-.628.998-1.189l.289-1.105c.029-.11.101-.143.137-.146zM8 0c-.236 0-.47.01-.701.03-.743.065-1.29.615-1.458 1.261l-.29 1.106c-.017.066-.078.158-.211.224a5.994 5.994 0 00-.668.386c-.123.082-.233.09-.3.071L3.27 2.776c-.644-.177-1.392.02-1.82.63a7.977 7.977 0 00-.704 1.217c-.315.675-.111 1.422.363 1.891l.815.806c.05.048.098.147.088.294a6.084 6.084 0 000 .772c.01.147-.038.246-.088.294l-.815.806c-.474.469-.678 1.216-.363 1.891.2.428.436.835.704 1.218.428.609 1.176.806 1.82.63l1.103-.303c.066-.019.176-.011.299.071.213.143.436.272.668.386.133.066.194.158.212.224l.289 1.106c.169.646.715 1.196 1.458 1.26a8.094 8.094 0 001.402 0c.743-.064 1.29-.614 1.458-1.26l.29-1.106c.017-.066.078-.158.211-.224a5.98 5.98 0 00.668-.386c.123-.082.233-.09.299-.071l1.103.303c.644.176 1.392-.021 1.82-.63.268-.382.505-.789.704-1.217.315-.675.111-1.422-.364-1.891l-.814-.806c-.05-.048-.098-.147-.088-.294a6.1 6.1 0 000-.772c-.01-.147.039-.246.088-.294l.814-.806c.475-.469.679-1.216.364-1.891a7.992 7.992 0 00-.704-1.218c-.428-.609-1.176-.806-1.82-.63l-1.103.303c-.066.019-.176.011-.299-.071a5.991 5.991 0 00-.668-.386c-.133-.066-.194-.158-.212-.224L10.16 1.29C9.99.645 9.444.095 8.701.031A8.094 8.094 0 008 0zm1.5 8a1.5 1.5 0 11-3 0 1.5 1.5 0 013 0zM11 8a3 3 0 11-6 0 3 3 0 016 0z'/></svg><svg class=i style='left:1927.30px;top:552.46px;width:29.60px;height:29.60px' viewBox='0 0 16 16' fill='#596068' fill-rule='evenodd'><path d='M0 1.75A.75.75 0 01.75 1h4.253c1.227 0 2.317.59 3 1.501A3.744 3.744 0 0111.006 1h4.245a.75.75 0 01.75.75v10.5a.75.75 0 01-.75.75h-4.507a2.25 2.25 0 00-1.591.659l-.622.621a.75.75 0 01-1.06 0l-.622-.621A2.25 2.25 0 005.258 13H.75a.75.75 0 01-.75-.75V1.75zm8.755 3a2.25 2.25 0 012.25-2.25H14.5v9h-3.757c-.71 0-1.4.201-1.992.572l.004-7.322zm-1.504 7.324l.004-5.073-.002-2.253A2.25 2.25 0 005.003 2.5H1.5v9h3.757a3.75 3.75 0 011.994.574z'/></svg>
</body></html>
